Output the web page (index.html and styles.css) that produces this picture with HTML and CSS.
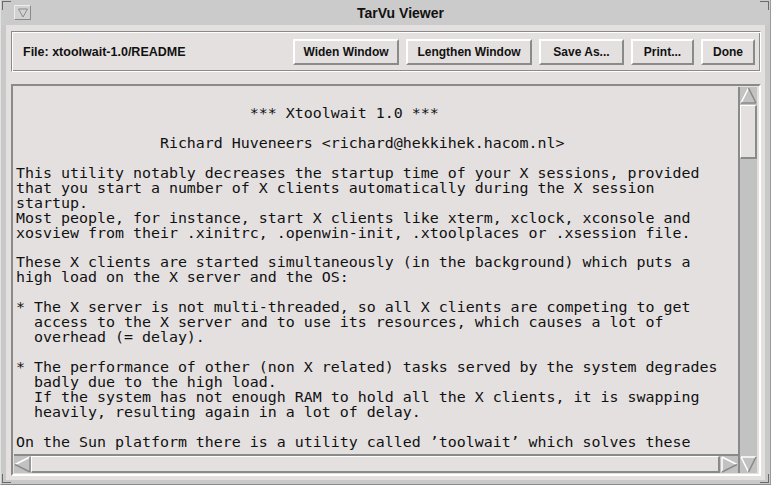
FILE: index.html
```html
<!DOCTYPE html>
<html>
<head>
<meta charset="utf-8">
<title>TarVu Viewer</title>
<link rel="stylesheet" href="styles.css">
</head>
<body>
<div class="window">
  <div class="titlebar">
    <div class="menubtn">
      <svg width="12" height="11" viewBox="0 0 12 11"><polygon points="1.5,2 10.5,2 6,10" fill="none" stroke="#8a8a8a" stroke-width="1"/></svg>
    </div>
    <div class="title">TarVu Viewer</div>
  </div>
  <div class="frame">
    <div class="client">
      <div class="toolbar">
        <div class="filelabel">File: xtoolwait-1.0/README</div>
        <div class="buttons">
          <button class="btn btn-widen">Widen Window</button>
          <button class="btn btn-lengthen">Lengthen Window</button>
          <button class="btn btn-save">Save As...</button>
          <button class="btn btn-print">Print...</button>
          <button class="btn btn-done">Done</button>
        </div>
      </div>
      <div class="textframe">
<pre class="text">

                          *** Xtoolwait 1.0 ***

                Richard Huveneers &lt;richard@hekkihek.hacom.nl&gt;

This utility notably decreases the startup time of your X sessions, provided
that you start a number of X clients automatically during the X session
startup.
Most people, for instance, start X clients like xterm, xclock, xconsole and
xosview from their .xinitrc, .openwin-init, .xtoolplaces or .xsession file.

These X clients are started simultaneously (in the background) which puts a
high load on the X server and the OS:

* The X server is not multi-threaded, so all X clients are competing to get
  access to the X server and to use its resources, which causes a lot of
  overhead (= delay).

* The performance of other (non X related) tasks served by the system degrades
  badly due to the high load.
  If the system has not enough RAM to hold all the X clients, it is swapping
  heavily, resulting again in a lot of delay.

On the Sun platform there is a utility called ’toolwait’ which solves these
</pre>
        <div class="vscroll">
          <div class="arrow">
            <svg width="17" height="17" viewBox="0 0 17 17">
              <polygon points="8.5,1 16,16 1,16" fill="#c2c2c2"/>
              <line x1="1" y1="16" x2="8.5" y2="1" stroke="#ffffff" stroke-width="1.5"/>
              <line x1="8.5" y1="1" x2="16" y2="16" stroke="#8a8a8a" stroke-width="1.5"/>
              <line x1="1" y1="16" x2="16" y2="16" stroke="#8a8a8a" stroke-width="1.5"/>
            </svg>
          </div>
          <div class="vthumb"></div>
          <div class="vtrough"></div>
          <div class="arrow">
            <svg width="17" height="17" viewBox="0 0 17 17">
              <polygon points="1,1 16,1 8.5,16" fill="#c2c2c2"/>
              <line x1="1" y1="1" x2="16" y2="1" stroke="#ffffff" stroke-width="1.5"/>
              <line x1="1" y1="1" x2="8.5" y2="16" stroke="#ffffff" stroke-width="1.5"/>
              <line x1="16" y1="1" x2="8.5" y2="16" stroke="#8a8a8a" stroke-width="1.5"/>
            </svg>
          </div>
        </div>
        <div class="hscroll">
          <div class="arrow">
            <svg width="17" height="17" viewBox="0 0 17 17">
              <polygon points="1,8.5 16,1 16,16" fill="#c2c2c2"/>
              <line x1="1" y1="8.5" x2="16" y2="1" stroke="#ffffff" stroke-width="1.5"/>
              <line x1="1" y1="8.5" x2="16" y2="16" stroke="#8a8a8a" stroke-width="1.5"/>
              <line x1="16" y1="1" x2="16" y2="16" stroke="#8a8a8a" stroke-width="1.5"/>
            </svg>
          </div>
          <div class="hthumb"></div>
          <div class="arrow">
            <svg width="17" height="17" viewBox="0 0 17 17">
              <polygon points="1,1 16,8.5 1,16" fill="#c2c2c2"/>
              <line x1="1" y1="1" x2="1" y2="16" stroke="#ffffff" stroke-width="1.5"/>
              <line x1="1" y1="1" x2="16" y2="8.5" stroke="#ffffff" stroke-width="1.5"/>
              <line x1="1" y1="16" x2="16" y2="8.5" stroke="#8a8a8a" stroke-width="1.5"/>
            </svg>
          </div>
        </div>
      </div>
    </div>
  </div>
  <span class="corner corner-tl"></span>
  <span class="corner corner-tr"></span>
  <span class="corner corner-bl"></span>
  <span class="corner corner-br"></span>
</div>
</body>
</html>
```

FILE: styles.css
```css
html, body {
  margin: 0;
  padding: 0;
}

body {
  width: 771px;
  height: 485px;
  overflow: hidden;
  background: #c9c9c9;
  font-family: "Liberation Sans", Arial, sans-serif;
}

.window {
  position: relative;
  box-sizing: border-box;
  width: 771px;
  height: 485px;
  display: flex;
  flex-direction: column;
  background: #c9c9c9;
  border-left: 1px solid #e2e2e2;
  border-right: 1px solid #9a9a9a;
  border-bottom: 1px solid #8a8a8a;
}

.titlebar {
  height: 25px;
  flex: none;
  display: flex;
  align-items: center;
  padding-left: 13px;
  background: #cbcbcb;
}

.menubtn {
  box-sizing: border-box;
  width: 17px;
  height: 15px;
  display: flex;
  align-items: center;
  justify-content: center;
  border: 1px solid;
  border-color: #ededed #8a8a8a #8a8a8a #ededed;
  background: #d2d2d2;
}

.title {
  flex: 1;
  text-align: center;
  font-weight: bold;
  font-size: 14px;
  color: #111;
  letter-spacing: 0;
}

.frame {
  flex: 1;
  display: flex;
  padding: 0 5px 4px 5px;
}

.client {
  flex: 1;
  display: flex;
  flex-direction: column;
  gap: 12px;
  padding: 6px 4px 4px 5px;
  background: #e4e0e0;
}

.toolbar {
  box-sizing: border-box;
  height: 41px;
  flex: none;
  display: flex;
  align-items: center;
  padding: 0 5px 0 11px;
  border: 1px solid;
  border-color: #8a8a8a #ffffff #ffffff #8a8a8a;
  box-shadow: inset 1px 1px 0 #ffffff, inset -1px -1px 0 #8a8a8a;
}

.filelabel {
  font-weight: bold;
  font-size: 12.5px;
  color: #111;
}

.buttons {
  margin-left: auto;
  display: flex;
  gap: 7px;
}

.btn {
  box-sizing: border-box;
  height: 26px;
  padding: 0;
  margin: 0;
  font-family: "Liberation Sans", Arial, sans-serif;
  font-weight: bold;
  font-size: 12px;
  color: #111;
  background: #e4e0e0;
  border: 2px solid;
  border-color: #ffffff #8a8a8a #8a8a8a #ffffff;
  text-align: center;
}

.btn-widen { width: 106px; }
.btn-lengthen { width: 126px; }
.btn-save { width: 85px; }
.btn-print { width: 63px; }
.btn-done { width: 54px; }

.textframe {
  flex: 1;
  min-height: 0;
  display: grid;
  grid-template-columns: 1fr 19px;
  grid-template-rows: 1fr 19px;
  border: 2px solid;
  border-color: #8a8a8a #ffffff #ffffff #8a8a8a;
  padding: 1px 2px 1px 1px;
}

.text {
  grid-column: 1;
  grid-row: 1;
  margin: 0;
  padding: 4px 0 0 2px;
  overflow: hidden;
  white-space: pre;
  font-family: "DejaVu Sans Mono", "Liberation Mono", monospace;
  font-size: 14.95px;
  line-height: 14.95px;
  color: #111;
}

.vscroll {
  grid-column: 2;
  grid-row: 1 / span 2;
  display: flex;
  flex-direction: column;
  border-left: 2px solid #8a8a8a;
  background: #c2c2c2;
}

.arrow {
  flex: none;
  width: 17px;
  height: 17px;
  display: flex;
}

.vthumb {
  flex: none;
  height: 51px;
  margin-top: 1px;
  background: #e4e0e0;
  border-top: 1px solid #ffffff;
  border-left: 1px solid #ffffff;
  border-right: 2px solid #8a8a8a;
  border-bottom: 2px solid #8a8a8a;
}

.vtrough {
  flex: 1;
}

.hscroll {
  grid-column: 1;
  grid-row: 2;
  display: flex;
  border-top: 2px solid #8a8a8a;
  background: #c2c2c2;
}

.hthumb {
  flex: 1;
  margin-right: 1px;
  background: #e4e0e0;
  border-top: 1px solid #ffffff;
  border-left: 1px solid #ffffff;
  border-right: 2px solid #8a8a8a;
  border-bottom: 2px solid #8a8a8a;
}

.corner {
  position: absolute;
  width: 8px;
  height: 8px;
  border: 0 solid #6a6a6a;
}

.corner-tl {
  left: 1px;
  top: 1px;
  border-top-width: 1px;
  border-left-width: 1px;
}

.corner-tr {
  right: 1px;
  top: 1px;
  border-top-width: 1px;
  border-right-width: 1px;
}

.corner-bl {
  left: 1px;
  bottom: 1px;
  border-bottom-width: 1px;
  border-left-width: 1px;
}

.corner-br {
  right: 1px;
  bottom: 1px;
  border-bottom-width: 1px;
  border-right-width: 1px;
}
```
